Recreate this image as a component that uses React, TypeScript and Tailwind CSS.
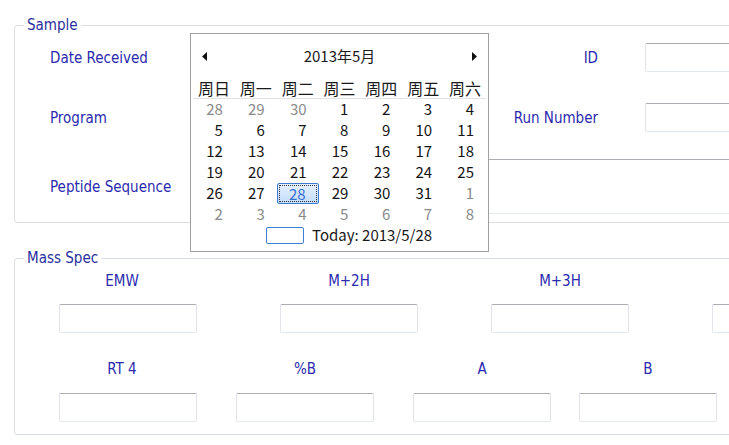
import React from 'react';

const labelFont = "font-['DejaVu_Sans_Condensed','Noto_Sans',sans-serif]";
const calFont = "font-['Noto_Sans_CJK_SC','Noto_Sans',sans-serif]";

// Windows 7 style textbox: darker top edge, pale sides/bottom
function TextBox({ className = '' }: { className?: string }) {
  return (
    <div
      className={`h-[29px] shrink-0 rounded-[2px] border border-t-[#abadb3] border-x-[#e2e3ea] border-b-[#e3e9ef] bg-white ${className}`}
    />
  );
}

function Label({ children, className = '' }: { children: React.ReactNode; className?: string }) {
  return (
    <span className={`whitespace-nowrap text-[15px] leading-[20px] text-[#2a2aae] ${className}`}>{children}</span>
  );
}

type Day = { n: number; muted?: boolean; selected?: boolean };

const weekdays = ['周日', '周一', '周二', '周三', '周四', '周五', '周六'];

const weeks: Day[][] = [
  [{ n: 28, muted: true }, { n: 29, muted: true }, { n: 30, muted: true }, { n: 1 }, { n: 2 }, { n: 3 }, { n: 4 }],
  [{ n: 5 }, { n: 6 }, { n: 7 }, { n: 8 }, { n: 9 }, { n: 10 }, { n: 11 }],
  [{ n: 12 }, { n: 13 }, { n: 14 }, { n: 15 }, { n: 16 }, { n: 17 }, { n: 18 }],
  [{ n: 19 }, { n: 20 }, { n: 21 }, { n: 22 }, { n: 23 }, { n: 24 }, { n: 25 }],
  [{ n: 26 }, { n: 27 }, { n: 28, selected: true }, { n: 29 }, { n: 30 }, { n: 31 }, { n: 1, muted: true }],
  [{ n: 2, muted: true }, { n: 3, muted: true }, { n: 4, muted: true }, { n: 5, muted: true }, { n: 6, muted: true }, { n: 7, muted: true }, { n: 8, muted: true }],
];

function MonthCalendar() {
  return (
    <div className={`absolute left-[190px] top-[33px] w-[299px] h-[219px] border border-[#a0a0a0] bg-white ${calFont}`}>
      {/* Header */}
      <div className="h-[45px] flex items-center justify-between px-[11px]">
        <svg width="5" height="9" viewBox="0 0 5 9">
          <path d="M5 0 L0 4.5 L5 9 Z" fill="#111" />
        </svg>
        <span className="text-[15px] text-[#1a1a1a]">2013年5月</span>
        <svg width="5" height="9" viewBox="0 0 5 9">
          <path d="M0 0 L5 4.5 L0 9 Z" fill="#111" />
        </svg>
      </div>

      {/* Weekdays */}
      <div className="mx-[2px] h-[20px] grid grid-cols-7 border-b border-[#e3e3e3]">
        {weekdays.map((w) => (
          <div key={w} className="text-center text-[16px] leading-[18px] text-[#1a1a1a]">
            {w}
          </div>
        ))}
      </div>

      {/* Days */}
      <div className="mx-[2px] grid grid-cols-7">
        {weeks.flat().map((d, i) => (
          <div
            key={i}
            className={`h-[21px] text-right pr-[12px] text-[15px] leading-[20px] ${
              d.selected
                ? 'border border-[#3d7bd0] rounded-[2px] bg-gradient-to-b from-[#e4f0fd] to-[#c4ddfb] text-[#3a6fd0] outline-1 outline-dotted outline-[#333] -outline-offset-3 pr-[11px]'
                : d.muted
                ? 'text-[#8a8a8a]'
                : 'text-[#141414]'
            }`}
          >
            {d.n}
          </div>
        ))}
      </div>

      {/* Today */}
      <div className="mt-[1px] ml-[75px] flex items-center gap-[8px]">
        <div className="w-[38px] h-[17px] rounded-[2px] border border-[#3c7fd6]" />
        <span className="text-[15px] leading-[18px] text-[#1a1a1a]">Today: 2013/5/28</span>
      </div>
    </div>
  );
}

export default function App() {
  return (
    <div className={`relative w-[729px] h-[445px] overflow-hidden bg-white ${labelFont}`}>
      {/* Sample group */}
      <fieldset className="ml-[14px] mt-[17px] w-[760px] rounded-[3px] border border-[#d5dfe5] pb-[8px]">
        <legend className="ml-[9px] px-[3px] text-[15px] leading-[16px] text-[#28309e]">Sample</legend>
        <div className="pt-[10px] pl-[35px] flex flex-col">
          <div className="flex items-center">
            <Label className="w-[465px]">Date Received</Label>
            <div className="w-[83px] flex justify-end">
              <Label>ID</Label>
            </div>
            <TextBox className="ml-[47px] w-[140px]" />
          </div>
          <div className="mt-[31px] flex items-center">
            <Label className="w-[465px]">Program</Label>
            <div className="w-[83px] flex justify-end">
              <Label>Run Number</Label>
            </div>
            <TextBox className="ml-[47px] w-[140px]" />
          </div>
          <div className="mt-[27px] flex items-center">
            <Label className="w-[140px]">Peptide Sequence</Label>
            <TextBox className="!h-[55px] w-[600px]" />
          </div>
        </div>
      </fieldset>

      {/* Mass Spec group */}
      <fieldset className="ml-[14px] mt-[27px] w-[760px] rounded-[3px] border border-[#d5dfe5] pb-[12px]">
        <legend className="ml-[9px] px-[3px] text-[15px] leading-[16px] text-[#28309e]">Mass Spec</legend>
        <div className="pt-[5px] pl-[44px] flex">
          <div className="flex flex-col items-center w-[138px]">
            <Label className="pr-[12px]">EMW</Label>
            <TextBox className="mt-[13px] w-[138px]" />
          </div>
          <div className="ml-[83px] flex flex-col items-center w-[138px]">
            <Label>M+2H</Label>
            <TextBox className="mt-[13px] w-[138px]" />
          </div>
          <div className="ml-[73px] flex flex-col items-center w-[138px]">
            <Label>M+3H</Label>
            <TextBox className="mt-[13px] w-[138px]" />
          </div>
          <div className="ml-[83px] flex flex-col items-center w-[138px]">
            <Label>&nbsp;</Label>
            <TextBox className="mt-[13px] w-[138px]" />
          </div>
        </div>
        <div className="mt-[26px] pl-[44px] flex">
          <div className="flex flex-col items-center w-[138px]">
            <Label className="pr-[12px]">RT 4</Label>
            <TextBox className="mt-[14px] w-[138px]" />
          </div>
          <div className="ml-[39px] flex flex-col items-center w-[138px]">
            <Label>%B</Label>
            <TextBox className="mt-[14px] w-[138px]" />
          </div>
          <div className="ml-[39px] flex flex-col items-center w-[138px]">
            <Label>A</Label>
            <TextBox className="mt-[14px] w-[138px]" />
          </div>
          <div className="ml-[28px] flex flex-col items-center w-[138px]">
            <Label>B</Label>
            <TextBox className="mt-[14px] w-[138px]" />
          </div>
        </div>
      </fieldset>

      <MonthCalendar />
    </div>
  );
}
